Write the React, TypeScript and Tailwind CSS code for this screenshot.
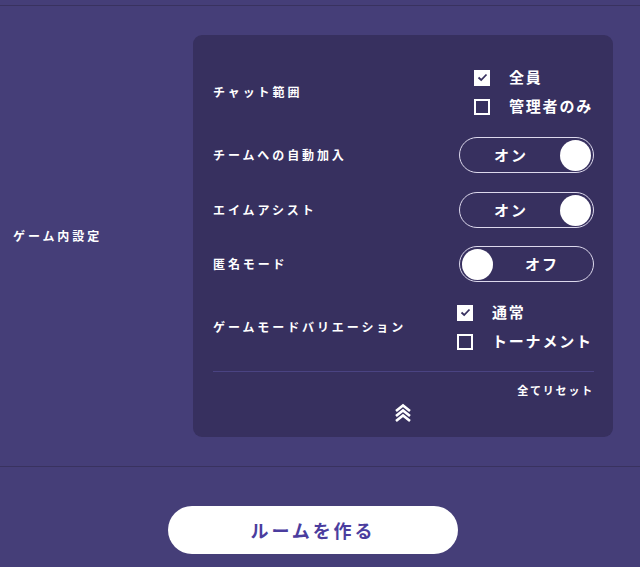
import React, { useState } from "react";

const font = { fontFamily: '"Noto Sans CJK JP", "Noto Sans", sans-serif' };

function Check({ checked, label, onToggle }: { checked: boolean; label: string; onToggle: () => void }) {
  return (
    <button type="button" onClick={onToggle} className="flex h-[29px] items-center gap-[19px] text-left">
      <span
        className={
          "flex h-4 w-4 items-center justify-center border-2 border-white " + (checked ? "bg-white" : "bg-transparent")
        }
      >
        {checked && (
          <svg width="11" height="9" viewBox="0 0 11 9" fill="none">
            <path d="M1.5 4.5 L4.2 7 L9.5 1.5" stroke="#37305f" strokeWidth="1.8" />
          </svg>
        )}
      </span>
      <span className="text-[15px] font-bold tracking-[1.8px] text-white">{label}</span>
    </button>
  );
}

function Toggle({ on, onToggle }: { on: boolean; onToggle: () => void }) {
  return (
    <button
      type="button"
      onClick={onToggle}
      className={
        "flex h-9 w-[135px] items-center rounded-full border-[1.5px] border-[#dcd8ec] p-[2px] " +
        (on ? "flex-row" : "flex-row-reverse")
      }
    >
      <span className="flex-1 text-center text-[15px] font-bold tracking-[2px] text-white">{on ? "オン" : "オフ"}</span>
      <span className="h-[31px] w-[31px] rounded-full bg-white" />
    </button>
  );
}

function Row({ label, children, className }: { label: string; children: React.ReactNode; className: string }) {
  return (
    <div className={"flex items-center justify-between " + className}>
      <span className="text-[12px] font-bold tracking-[2.9px] text-white">{label}</span>
      {children}
    </div>
  );
}

export default function App() {
  const [chat, setChat] = useState({ all: true, admin: false });
  const [autoJoin, setAutoJoin] = useState(true);
  const [aim, setAim] = useState(true);
  const [anon, setAnon] = useState(false);
  const [mode, setMode] = useState({ normal: true, tournament: false });

  return (
    <div className="min-h-[567px] bg-[#453e78] pt-[5px]" style={font}>
      <section className="flex border-y border-[#39325f] pt-[29px] pb-[29px]">
        <div className="flex w-[193px] items-center pl-[13px]">
          <span className="text-[12px] font-bold tracking-[2.9px] text-white">ゲーム内設定</span>
        </div>
        <div className="w-[420px] rounded-[9px] bg-[#37305f] pl-5 pr-[19px] pt-[28px] pb-[14px]">
          <Row label="チャット範囲" className="h-[58px]">
            <div className="flex w-[120px] flex-col">
              <Check checked={chat.all} label="全員" onToggle={() => setChat({ ...chat, all: !chat.all })} />
              <Check checked={chat.admin} label="管理者のみ" onToggle={() => setChat({ ...chat, admin: !chat.admin })} />
            </div>
          </Row>
          <Row label="チームへの自動加入" className="mt-4 h-9">
            <Toggle on={autoJoin} onToggle={() => setAutoJoin(!autoJoin)} />
          </Row>
          <Row label="エイムアシスト" className="mt-[19px] h-9">
            <Toggle on={aim} onToggle={() => setAim(!aim)} />
          </Row>
          <Row label="匿名モード" className="mt-[18px] h-9">
            <Toggle on={anon} onToggle={() => setAnon(!anon)} />
          </Row>
          <Row label="ゲームモードバリエーション" className="mt-4 h-[58px]">
            <div className="flex w-[137px] flex-col">
              <Check checked={mode.normal} label="通常" onToggle={() => setMode({ ...mode, normal: !mode.normal })} />
              <Check
                checked={mode.tournament}
                label="トーナメント"
                onToggle={() => setMode({ ...mode, tournament: !mode.tournament })}
              />
            </div>
          </Row>
          <div className="mt-[15px] h-px bg-[#4a4382]" />
          <div className="mt-[10px] flex justify-end">
            <button type="button" className="text-[11px] font-bold leading-4 tracking-[1.8px] text-white">
              全てリセット
            </button>
          </div>
          <div className="mt-[5px] flex justify-center pr-[2px]">
            <svg width="18" height="20" viewBox="0 0 18 20" fill="none" stroke="white" strokeWidth="2.6">
              <path d="M2 8 L9 2.5 L16 8" />
              <path d="M2 13 L9 7.5 L16 13" />
              <path d="M2 18 L9 12.5 L16 18" />
            </svg>
          </div>
        </div>
      </section>
      <div className="flex justify-center pt-[39px] pr-[14px]">
        <button
          type="button"
          className="h-12 w-[290px] rounded-full bg-white text-[18px] font-bold tracking-[2.9px] text-[#4b3d9e]"
        >
          ルームを作る
        </button>
      </div>
    </div>
  );
}
